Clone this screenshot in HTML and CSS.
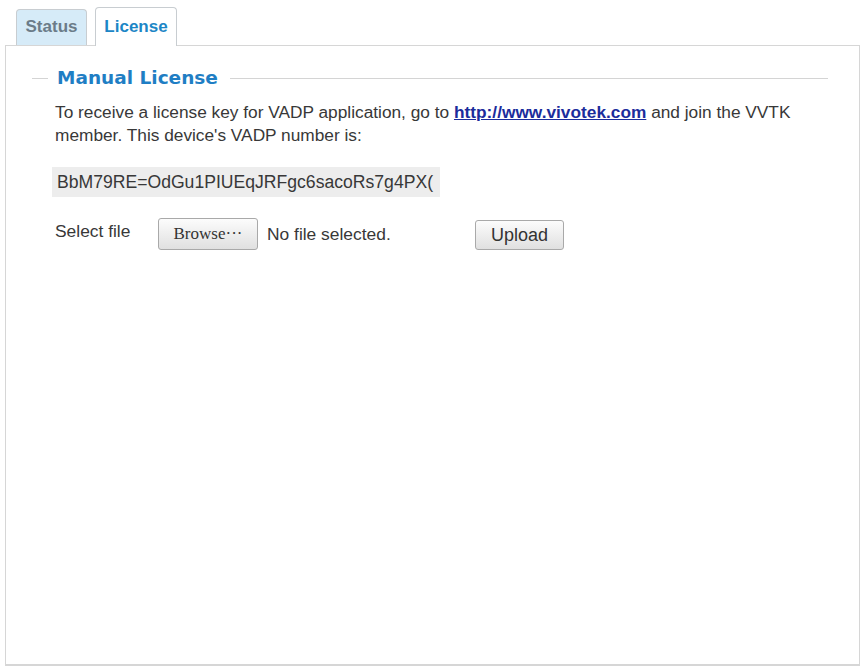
FILE: index.html
```html
<!DOCTYPE html>
<html lang="en">

<head>
    <meta charset="UTF-8">
    <title>License</title>
    <link rel="stylesheet" href="styles.css">
</head>

<body>
    <div class="tabs">
        <a class="tab" href="javascript:;">Status</a>
        <a class="tab tab-active" href="javascript:;">License</a>
    </div>
    <div class="panel">
        <fieldset class="group">
            <legend>Manual License</legend>
            <p class="desc">To receive a license key for VADP application, go to <a href="javascript:;" class="link">http://www.vivotek.com</a> and join the VVTK member. This device's VADP number is:</p>
            <div class="vadp-number">BbM79RE=OdGu1PIUEqJRFgc6sacoRs7g4PX(</div>
            <div class="upload-row">
                <span class="label">Select file</span>
                <button class="btn btn-browse">Browse&middot;&middot;&middot;</button>
                <span class="file-name">No file selected.</span>
                <button class="btn btn-upload">Upload</button>
            </div>
        </fieldset>
    </div>
</body>

</html>
```

FILE: styles.css
```css
html,
body {
    margin: 0;
    padding: 0;
    background: #fff;
    font-family: "Liberation Sans", Arial, sans-serif;
    color: #383838;
}

body {
    width: 862px;
    height: 668px;
    overflow: hidden;
}

/* 选项卡 */
.tabs {
    display: flex;
    align-items: flex-end;
    gap: 8px;
    height: 45px;
    padding-left: 16px;
    box-sizing: border-box;
    position: relative;
    z-index: 1;
}

.tab {
    display: block;
    box-sizing: border-box;
    width: 71px;
    height: 36px;
    text-align: center;
    line-height: 34px;
    font-size: 17px;
    font-weight: bold;
    text-decoration: none;
    color: #6b7c89;
    background: #d6ebf8;
    border: 1px solid #c8cdd1;
    border-bottom: none;
    border-radius: 4px 4px 0 0;
}

.tab-active {
    width: 82px;
    height: 39px;
    margin-bottom: -1px;
    line-height: 38px;
    color: #1c86c6;
    background: #fff;
}

/* 主体 */
.panel {
    margin: 0 2px 0 5px;
    height: 621px;
    box-sizing: border-box;
    border: 1px solid #d6d6d6;
    border-bottom-width: 2px;
    padding: 21px 31px 0 26px;
}

.group {
    margin: 0;
    padding: 0 0 0 23px;
    border: none;
    border-top: 1px solid #d4d4d4;
}

.group legend {
    margin-left: -7px;
    padding: 0 12px 0 9px;
    line-height: 22px;
    font-family: "DejaVu Sans", Verdana, sans-serif;
    font-size: 18.5px;
    font-weight: bold;
    color: #1f7ec4;
}

.desc {
    margin: 12px 0 0 0;
    width: 760px;
    font-size: 17.3px;
    line-height: 23px;
}

.link {
    color: #1b2c9c;
    font-weight: bold;
    text-decoration: underline;
}

.vadp-number {
    margin: 20px 0 0 -3px;
    width: 388px;
    height: 30px;
    box-sizing: border-box;
    padding-left: 5px;
    line-height: 30px;
    font-size: 17.6px;
    white-space: nowrap;
    overflow: hidden;
    background: #ededed;
}

.upload-row {
    display: flex;
    align-items: center;
    margin-top: 21px;
    font-size: 17.4px;
}

.label {
    width: 103px;
    align-self: flex-start;
    padding-top: 3px;
}

.btn {
    box-sizing: border-box;
    padding: 0;
    border: 1px solid #a9a9a9;
    border-radius: 3px;
    background: linear-gradient(#fcfcfc, #e0e0e0);
    color: #333;
    cursor: pointer;
}

.btn-browse {
    width: 100px;
    height: 32px;
    font-family: "Liberation Serif", "Times New Roman", serif;
    font-size: 17px;
}

.file-name {
    margin-left: 9px;
    width: 208px;
}

.btn-upload {
    width: 89px;
    height: 30px;
    margin-top: 2px;
    font-family: "Liberation Sans", Arial, sans-serif;
    font-size: 18px;
}
```
